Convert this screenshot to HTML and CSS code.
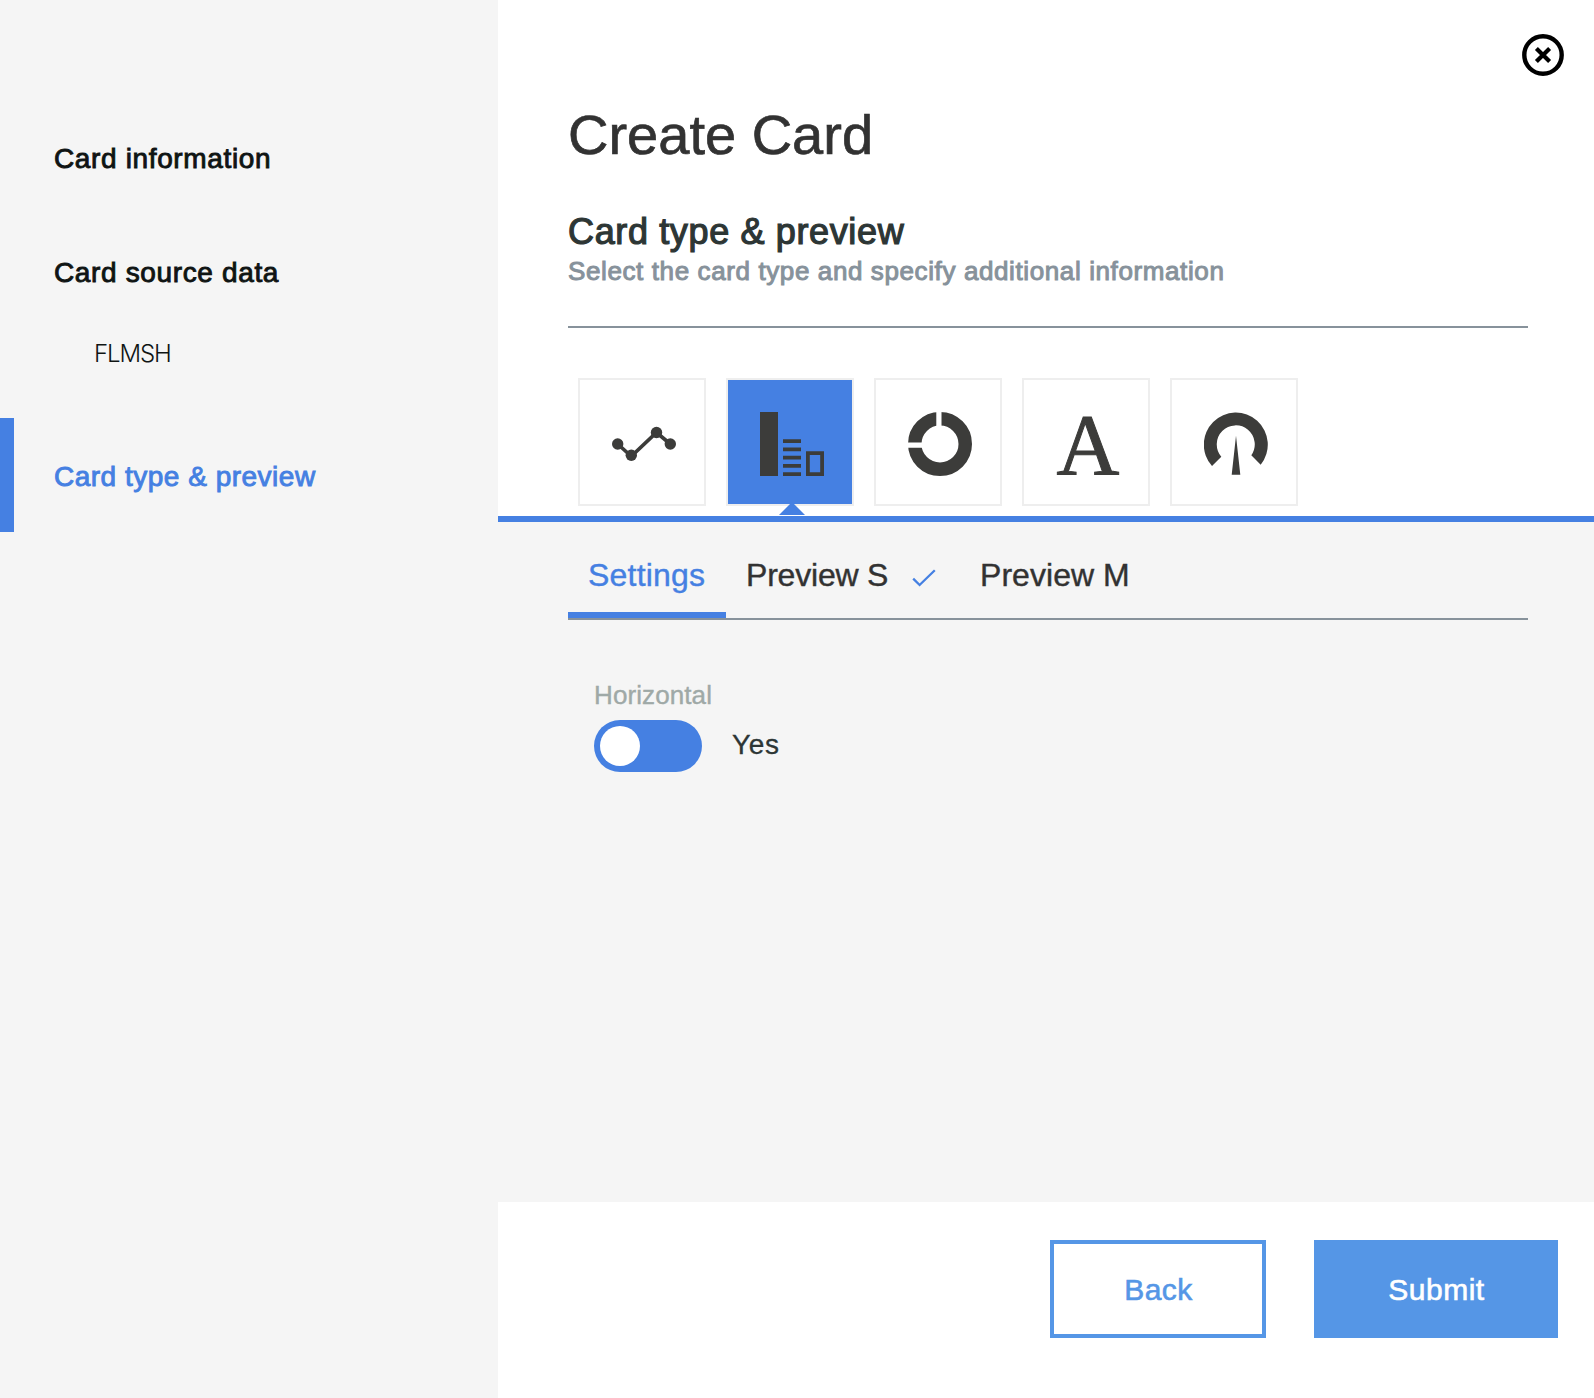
FILE: index.html
```html
<!DOCTYPE html>
<html lang="en">
<head>
<meta charset="utf-8">
<title>Create Card</title>
<link rel="stylesheet" href="styles.css">
</head>
<body>
<div class="modal">
  <nav class="sidebar">
    <a class="step">Card information</a>
    <a class="step">Card source data</a>
    <a class="substep">FLMSH</a>
    <a class="step step-active">Card type &amp; preview</a>
  </nav>
  <main class="content">
    <button class="close" aria-label="Close">
      <svg width="44" height="44" viewBox="0 0 44 44" fill="none" stroke="#000">
        <circle cx="22" cy="22" r="18.7" stroke-width="4.4"/>
        <path d="M15.4 15.4 28.6 28.6M28.6 15.4 15.4 28.6" stroke-width="4.2"/>
      </svg>
    </button>
    <header class="header">
      <h1 class="title">Create Card</h1>
      <h2 class="subtitle">Card type &amp; preview</h2>
      <p class="description">Select the card type and specify additional information</p>
    </header>
    <div class="types">
      <button class="type" aria-label="Line chart">
        <svg class="icon" viewBox="0 0 64 64">
          <path d="M5.7 32 19.3 44.3 44.5 20.5 58.3 32" fill="none" stroke="#3c3c3a" stroke-width="3.7"/>
          <circle cx="5.7" cy="32" r="5.7"/><circle cx="19.3" cy="43.3" r="5.7"/><circle cx="44.5" cy="20.5" r="5.7"/><circle cx="58.3" cy="32" r="5.7"/>
        </svg>
      </button>
      <button class="type type-active" aria-label="Bar chart">
        <svg class="icon" viewBox="0 0 64 64">
          <path d="M0 0h18v64H0zM23 27.2h18V31H23zM23 35.4h18v3.8H23zM23 43.7h18v3.8H23zM23 51.9h18v3.8H23zM23 60.2h18V64H23z"/>
          <path d="M46 39.2h18V64H46zM49.8 43v17.2h10.4V43z" fill-rule="evenodd"/>
        </svg>
      </button>
      <button class="type" aria-label="Donut chart">
        <svg class="icon" viewBox="0 0 64 64">
          <circle cx="32" cy="32" r="25.25" fill="none" stroke="#3c3c3a" stroke-width="13.5"/>
          <path d="M28.3 0h5.2v16h-5.2zM0 30.6h16v5.1H0z" fill="#fff"/>
        </svg>
      </button>
      <button class="type type-text" aria-label="Text">A</button>
      <button class="type" aria-label="Gauge">
        <svg class="icon" viewBox="0 0 64 64">
          <path d="M8 54A32 32 0 1 1 56.7 52.7L47.3 43.3A19 19 0 1 0 17.3 44.7ZM32 23.7 36.3 62.7H27.7Z"/>
        </svg>
      </button>
    </div>
    <section class="panel">
      <div class="tabs">
        <a class="tab tab-active">Settings</a>
        <a class="tab tab-s">Preview S
          <svg class="check" width="24" height="18" viewBox="0 0 24 18"><path d="M1.2 9.6 7.6 16 22.8 1.2" fill="none" stroke="#4580e2" stroke-width="2.3"/></svg>
        </a>
        <a class="tab tab-m">Preview M</a>
      </div>
      <div class="field">
        <span class="label">Horizontal</span>
        <div class="toggle-row">
          <span class="toggle"><span class="knob"></span></span>
          <span class="value">Yes</span>
        </div>
      </div>
    </section>
    <footer class="footer">
      <button class="button back">Back</button>
      <button class="button submit">Submit</button>
    </footer>
  </main>
</div>
</body>
</html>
```
FILE: styles.css
```css
* { box-sizing: border-box; }

body {
  margin: 0;
  font-family: "Liberation Sans", Arial, sans-serif;
  background: #fff;
}

h1, h2, p { margin: 0; font-weight: 400; }

button {
  padding: 0;
  border: 0;
  border-radius: 0;
  background: none;
  font-family: inherit;
}

svg { display: block; }

.modal { display: flex; height: 1398px; }

/* Step navigation */
.sidebar {
  width: 498px;
  flex: none;
  padding-top: 100px;
  background: #f5f5f5;
}

.step {
  display: block;
  height: 114px;
  padding: 1px 0 0 54px;
  font-size: 28px;
  line-height: 114px;
  letter-spacing: 0.64px;
  color: #0f1413;
  -webkit-text-stroke: 0.9px;
}

.substep {
  display: block;
  padding: 1px 0 0 94px;
  margin-bottom: 39px;
  font-family: Inter, "Liberation Sans", sans-serif;
  font-size: 24px;
  font-weight: 300;
  line-height: 50px;
  letter-spacing: -1.1px;
  color: #0f1413;
}

.step-active {
  padding-left: 40px;
  border-left: 14px solid #4580e2;
  letter-spacing: 0.5px;
  color: #4580e2;
}

.step { padding-top: 2px; }

/* Main column */
.content {
  position: relative;
  display: flex;
  flex: 1;
  flex-direction: column;
}

.close { position: absolute; top: 33px; right: 29px; }

.header {
  height: 328px;
  margin: 0 66px 0 70px;
  padding-top: 103px;
  border-bottom: 2px solid #87929b;
}

.title {
  font-size: 56px;
  line-height: 64px;
  color: #323232;
  -webkit-text-stroke: 0.7px;
}

.subtitle {
  margin-top: 44px;
  font-size: 36px;
  line-height: 42px;
  letter-spacing: 0.64px;
  color: #2d3635;
  -webkit-text-stroke: 1.2px;
}

.description {
  font-size: 26px;
  line-height: 36px;
  letter-spacing: 0.61px;
  white-space: nowrap;
  color: #87929b;
  -webkit-text-stroke: 1px;
}

/* Card type picker */
.types {
  display: flex;
  gap: 20px;
  padding: 50px 0 10px 80px;
}

.type {
  position: relative;
  display: flex;
  align-items: center;
  justify-content: center;
  width: 128px;
  height: 128px;
  padding: 4px 0 0 4px;
  border: 2px solid #eee;
}

.icon { width: 64px; height: 64px; fill: #3c3c3a; }

.type-active { background: #4580e2 padding-box; }

.type-active::after {
  content: "";
  position: absolute;
  top: 122px;
  left: 51px;
  border: 13px solid transparent;
  border-top: 0;
  border-bottom-color: #4580e2;
}

.type-text {
  padding: 6px 0 0 4px;
  font-family: "Liberation Serif", serif;
  font-size: 87px;
  line-height: 124px;
  color: #3c3c3a;
  -webkit-text-stroke: 1px;
}

/* Settings panel */
.panel {
  flex: 1;
  padding: 0 66px 0 70px;
  border-top: 6px solid #4580e2;
  background: #f5f5f5;
}

.tabs { display: flex; border-bottom: 2px solid #87929b; }

.tab {
  display: flex;
  height: 96px;
  padding: 33px 20px 0;
  font-size: 32px;
  line-height: 40px;
  letter-spacing: 0.2px;
  color: #323232;
  -webkit-text-stroke: 0.4px;
}

.tab-active { width: 158px; border-bottom: 6px solid #4580e2; color: #4580e2; }

.tab-s { width: 234px; letter-spacing: -0.2px; }

.tab-m { letter-spacing: 0.05px; }

.check { margin: 14px 0 0 24px; }

.field { padding: 59px 0 0 26px; }

.label {
  display: block;
  margin-bottom: 9px;
  font-size: 26px;
  line-height: 32px;
  letter-spacing: 0.1px;
  color: #9fa9a7;
  -webkit-text-stroke: 0.4px;
}

.toggle-row { display: flex; gap: 30px; }

.toggle {
  width: 108px;
  height: 52px;
  padding: 6px;
  border-radius: 26px;
  background: #4580e2;
}

.knob {
  display: block;
  width: 40px;
  height: 40px;
  border-radius: 50%;
  background: #fff;
}

.value {
  font-size: 28px;
  line-height: 49px;
  letter-spacing: 0.6px;
  color: #2d3635;
  -webkit-text-stroke: 0.3px;
}

/* Actions */
.footer {
  display: flex;
  gap: 48px;
  justify-content: flex-end;
  height: 196px;
  padding: 38px 36px 0 0;
}

.button {
  height: 98px;
  padding: 2px 0 0 1px;
  font-size: 30px;
  letter-spacing: 0.5px;
  border: 4px solid #5596e6;
  -webkit-text-stroke: 0.6px;
}

.back { width: 216px; color: #5596e6; }

.submit { width: 244px; color: #fff; background: #5596e6; }
```
